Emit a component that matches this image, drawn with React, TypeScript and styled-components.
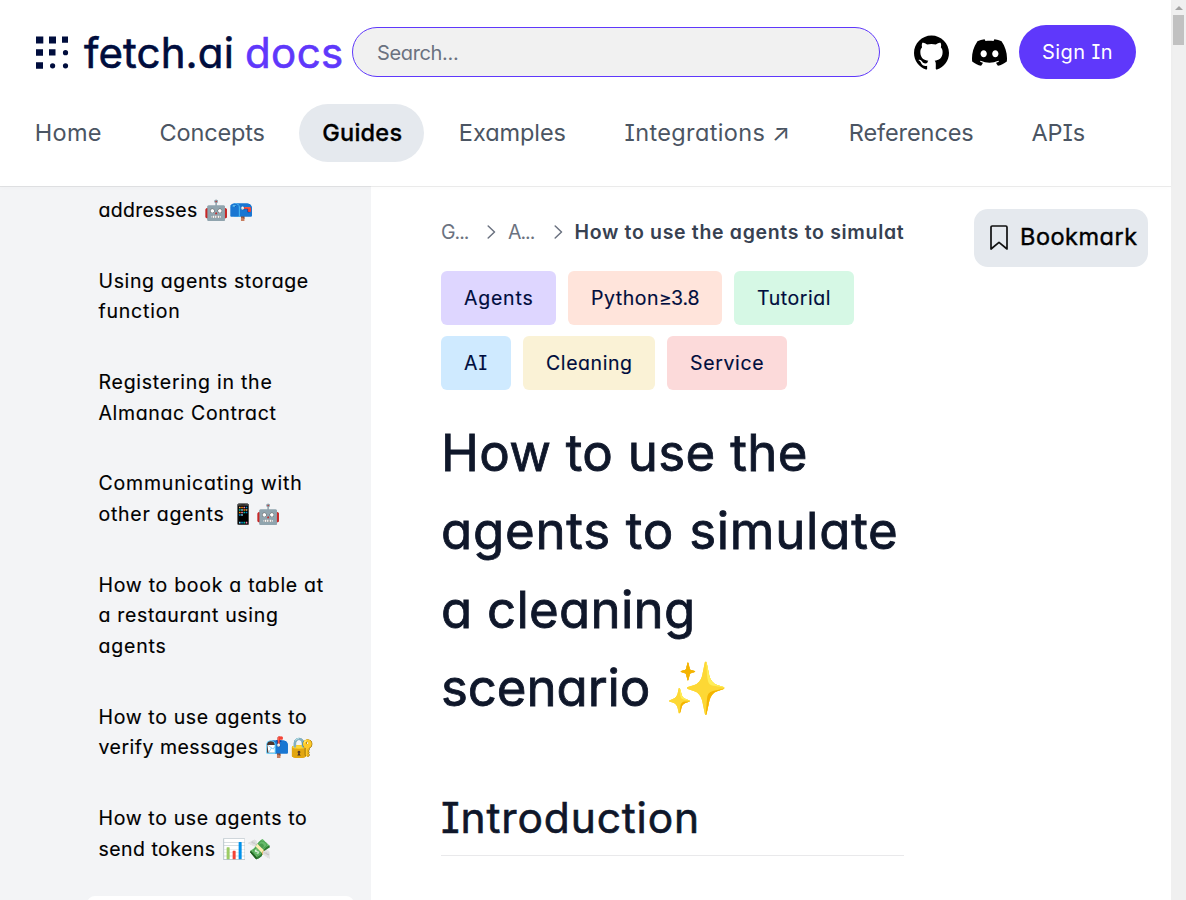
import React from 'react';
import styled, { createGlobalStyle } from 'styled-components';
import { SiGithub, SiDiscord } from 'react-icons/si';

const Global = createGlobalStyle`
  * { box-sizing: border-box; }
  body {
    margin: 0;
    background: #fff;
    font-family: Inter, "Liberation Sans", sans-serif;
    font-feature-settings: "cv11", "cv08";
    overflow: hidden;
  }
  button { font: inherit; font-feature-settings: inherit; border: 0; }
`;

const Text = styled.span<{ $ls?: number }>`
  letter-spacing: ${(p) => p.$ls ?? 0}px;
  white-space: pre;
`;

const Line = styled(Text)`
  display: block;
`;

const Window = styled.div`
  display: flex;
  width: 1186px;
  height: 900px;
`;

const Page = styled.div`
  display: flex;
  flex-direction: column;
  width: 1171px;
  height: 900px;
`;

const Header = styled.header`
  position: relative;
  z-index: 1;
  height: 186px;
  padding-top: 25px;
  background: #fff;
  box-shadow: 0 2px 4px rgba(0, 0, 0, 0.02), 0 1px 0 rgba(0, 0, 0, 0.07);
`;

const TopRow = styled.div`
  display: flex;
  align-items: center;
  height: 54px;
  padding-left: 36px;
`;

const Logo = styled.a`
  display: flex;
  align-items: center;
  width: 316px;
  padding-top: 1px;
  font-size: 42px;
  -webkit-text-stroke: 0.6px currentColor;
  line-height: 54px;
  color: #000d3d;
  white-space: nowrap;
`;

const LogoMark = styled.svg`
  margin-right: 14px;
  flex: none;
`;

const Docs = styled(Text)`
  margin-left: 11px;
  color: #5f38fb;
`;

const SearchBox = styled.div`
  width: 528px;
  height: 50px;
  padding: 0 24px;
  border: 1px solid #5f38fb;
  border-radius: 25px;
  background: #f1f1f1;
  color: #6b7280;
  font-size: 20px;
  line-height: 50px;
`;

const Socials = styled.div`
  display: flex;
  gap: 23px;
  margin: 0 12px 0 34px;
`;

const SignIn = styled.button`
  width: 117px;
  height: 54px;
  padding: 0;
  border-radius: 27px;
  background: #5f38fb;
  color: #fff;
  font-size: 20px;
`;

const Nav = styled.nav`
  display: flex;
  gap: 11.7px;
  margin: 25px 0 0 11.8px;
`;

const NavItem = styled.a<{ $w: number; $active?: boolean }>`
  width: ${(p) => p.$w}px;
  height: 58px;
  padding-left: 23px;
  border-radius: 29px;
  line-height: 58px;
  font-size: 23.5px;
  white-space: nowrap;
  color: ${(p) => (p.$active ? '#000' : '#4b5563')};
  font-weight: ${(p) => (p.$active ? 500 : 400)};
  background: ${(p) => (p.$active ? '#e5e9ee' : 'transparent')};
  -webkit-text-stroke: ${(p) => (p.$active ? '0.3px currentColor' : '0')};
`;

const Body = styled.div`
  display: flex;
  flex: 1;
  min-height: 0;
`;

const Sidebar = styled.aside`
  display: flex;
  flex-direction: column;
  flex: none;
  gap: 22.9px;
  width: 371px;
  padding: 0 17px 0 87px;
  overflow: hidden;
  background: #f3f4f6;
`;

const SideItem = styled.a<{ $active?: boolean }>`
  flex: none;
  padding: 8.8px 11.5px 8.7px;
  border-radius: 8px;
  color: #000;
  font-size: 19.5px;
  line-height: 30.5px;
  -webkit-text-stroke: 0.15px currentColor;
  background: ${(p) => (p.$active ? '#fff' : 'transparent')};
`;

const Main = styled.main`
  width: 463px;
  margin-left: 70px;
  padding-top: 31px;
  overflow: hidden;
`;

const Crumbs = styled.div`
  display: flex;
  align-items: center;
  height: 30px;
  overflow: hidden;
  font-size: 19.5px;
  line-height: 30px;
  color: #6b7280;
  svg { flex: none; }
`;

const Crumb = styled(Text)<{ $w: number }>`
  flex: none;
  width: ${(p) => p.$w}px;
  svg + & { margin-left: 12px; }
`;

const CurrentCrumb = styled(Text)`
  margin-left: 11.5px;
  font-weight: 600;
  color: #374151;
`;

const Tags = styled.div`
  display: flex;
  flex-wrap: wrap;
  gap: 11px 12px;
  margin-top: 24px;
`;

const Tag = styled.span<{ $w: number; $bg: string }>`
  width: ${(p) => p.$w}px;
  height: 54px;
  padding-left: 23px;
  border-radius: 6px;
  background: ${(p) => p.$bg};
  color: #000d3d;
  font-size: 19.5px;
  line-height: 54px;
  -webkit-text-stroke: 0.15px currentColor;
  white-space: nowrap;
`;

const Title = styled.h1`
  margin: 24px 0 0;
  font-size: 51px;
  font-weight: 400;
  line-height: 78.3px;
  color: #0f172a;
  -webkit-text-stroke: 0.8px currentColor;
`;

const Section = styled.h2`
  height: 73px;
  margin: 56px 0 0;
  padding-top: 5px;
  border-bottom: 1px solid #e9e9eb;
  font-size: 42.5px;
  font-weight: 400;
  line-height: 60px;
  color: #0f172a;
  -webkit-text-stroke: 0.6px currentColor;
`;

const Bookmark = styled.button`
  display: flex;
  align-items: center;
  gap: 12px;
  width: 174px;
  height: 58px;
  margin: 23px 0 0 70px;
  padding: 0 0 3px 16px;
  border-radius: 14px;
  background: #e5e9ee;
  color: #000;
  font-size: 23.5px;
  -webkit-text-stroke: 0.4px currentColor;
  svg { margin-top: 2px; }
`;

const Scrollbar = styled.div`
  width: 15px;
  height: 900px;
  padding: 6px 2px 0;
  background: #f0f0f0;
`;

const Arrow = styled.div`
  width: 0;
  margin: 0 auto 5px;
  border: 4px solid transparent;
  border-top-width: 0;
  border-bottom-color: #a3a3a3;
`;

const Thumb = styled.div`
  height: 30px;
  background: #c1c1c1;
`;

const Chevron = () => (
  <svg width="9" height="14" viewBox="0 0 9 14" fill="none" stroke="#6b7280" strokeWidth="1.5" strokeLinecap="round" strokeLinejoin="round">
    <path d="M1.2 1 7.5 7 1.2 13" />
  </svg>
);

type Segment = [string, number];

const navItems: { parts: Segment[]; w: number; active?: boolean }[] = [
  { parts: [['Home', 0.29]], w: 113 },
  { parts: [['Concepts', -0.15]], w: 151 },
  { parts: [['Guides', 0.25]], w: 125, active: true },
  { parts: [['Examples', -0.07]], w: 154 },
  { parts: [['Integrations', 0.35], [' ↗', 0]], w: 212.5 },
  { parts: [['References', -0.08]], w: 171 },
  { parts: [['APIs', -0.1]], w: 100 },
];

const sideItems: Segment[][][] = [
  [[['addresses', 0.28], [' 🤖📪', 1.2]]],
  [[['Using agents storage', 0.63]], [['function', 0.78]]],
  [[['Registering in the', 0.75]], [['Almanac Contract', 0.65]]],
  [[['Communicating with', 0.8]], [['other agents', 0.74], [' 📱🤖', 1.2]]],
  [[['How to book a table at', 0.72]], [['a restaurant using', 0.66]], [['agents', 0.79]]],
  [[['How to use agents to', 0.65]], [['verify messages', 0.49], [' 📬🔐', 1.2]]],
  [[['How to use agents to', 0.65]], [['send tokens', 0.46], [' 📊💸', 1.2]]],
];

const tags: { parts: Segment[]; w: number; bg: string }[] = [
  { parts: [['Agents', 0.78]], w: 115, bg: '#ded6ff' },
  { parts: [['Python', 0.53], ['≥', -0.9], ['3.8', -0.1]], w: 154, bg: '#ffe4db' },
  { parts: [['Tutorial', 0.55]], w: 120, bg: '#d6f8e5' },
  { parts: [['AI', 0.97]], w: 70, bg: '#cfeaff' },
  { parts: [['Cleaning', 0.58]], w: 132, bg: '#faf2d6' },
  { parts: [['Service', 0.65]], w: 120, bg: '#fcdada' },
];

const Segments = ({ parts }: { parts: Segment[] }) => (
  <>
    {parts.map(([text, ls]) => (
      <Text key={text} $ls={ls}>{text}</Text>
    ))}
  </>
);

export default function App() {
  return (
    <Window>
      <Global />
      <Page>
        <Header>
          <TopRow>
            <Logo>
              <LogoMark width="34" height="34" viewBox="0 0 34 34" fill="#000d3d">
                <path d="M0 .5h7.3v7H0zM13 .5h7v7h-7zM26 .5h6v6.3h-6zM0 13.3h7v6.5H0zM13 13.3h6.5v6.2H13zM0 26.2h7v6.6H0z" />
                <circle cx="29.5" cy="16.7" r="2.6" />
                <circle cx="16.6" cy="29.8" r="2.6" />
                <circle cx="29.5" cy="29.8" r="2.6" />
              </LogoMark>
              <Text $ls={0.13}>fetch.ai</Text>
              <Docs $ls={0.4}>docs</Docs>
            </Logo>
            <SearchBox><Text $ls={-0.35}>Search...</Text></SearchBox>
            <Socials>
              <SiGithub size={35} />
              <SiDiscord size={35} />
            </Socials>
            <SignIn><Text $ls={0.42}>Sign In</Text></SignIn>
          </TopRow>
          <Nav>
            {navItems.map((n) => (
              <NavItem key={n.parts[0][0]} $w={n.w} $active={n.active}>
                <Segments parts={n.parts} />
              </NavItem>
            ))}
          </Nav>
        </Header>
        <Body>
          <Sidebar>
            {sideItems.map((lines, i) => (
              <SideItem key={i}>
                {lines.map((parts, j) => (
                  <Line key={j}><Segments parts={parts} /></Line>
                ))}
              </SideItem>
            ))}
            <SideItem $active />
          </Sidebar>
          <Main>
            <Crumbs>
              <Crumb $w={46} $ls={-1}>G...</Crumb>
              <Chevron />
              <Crumb $w={46} $ls={-1}>A...</Crumb>
              <Chevron />
              <CurrentCrumb $ls={0.67}>How to use the agents to simulat</CurrentCrumb>
            </Crumbs>
            <Tags>
              {tags.map((t) => (
                <Tag key={t.parts[0][0]} $w={t.w} $bg={t.bg}><Segments parts={t.parts} /></Tag>
              ))}
            </Tags>
            <Title>
              <Line $ls={0.3}>How to use the</Line>
              <Line $ls={0.72}>agents to simulate</Line>
              <Line $ls={0.25}>a cleaning</Line>
              <Line $ls={-0.1}>scenario ✨</Line>
            </Title>
            <Section><Text $ls={0.85}>Introduction</Text></Section>
          </Main>
          <Bookmark>
            <svg width="18" height="25" viewBox="0 0 18 25" fill="none" stroke="#111" strokeWidth="1.7" strokeLinejoin="round">
              <path d="M1 2.2Q1 1 2.2 1h13.6Q17 1 17 2.2V24l-8-6.7L1 24z" />
            </svg>
            <Text $ls={0.5}>Bookmark</Text>
          </Bookmark>
        </Body>
      </Page>
      <Scrollbar>
        <Arrow />
        <Thumb />
      </Scrollbar>
    </Window>
  );
}
